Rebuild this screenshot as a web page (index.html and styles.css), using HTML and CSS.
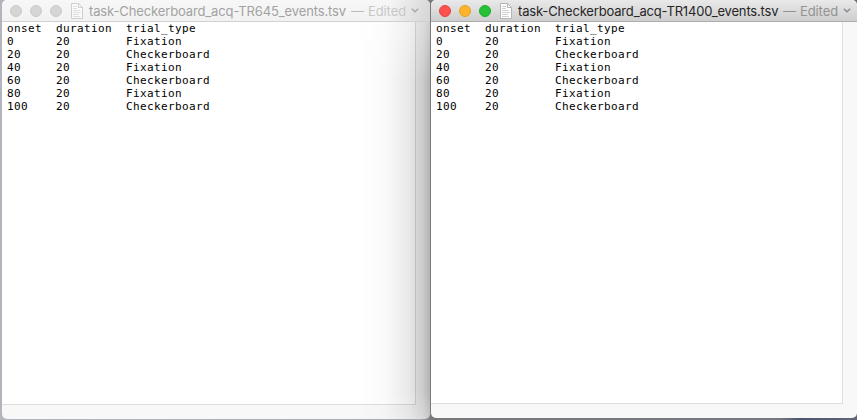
FILE: index.html
```html
<!DOCTYPE html>
<html lang="en">
<head>
<meta charset="utf-8">
<title>Event files</title>
<link rel="stylesheet" href="styles.css">
</head>
<body>
<main class="desktop">
  <section class="window inactive">
    <header class="titlebar">
      <div class="lights"><i class="light close"></i><i class="light minimize"></i><i class="light expand"></i></div>
      <svg class="doc" viewBox="0 0 12 16"><path class="page" d="M.5.5h7l4 4v11H.5z"/><path class="fold" d="M7.5.5v4h4"/><path class="lines" d="M2 3.5h4M2 5.5h4M2 7.5h7M2 9.5h8M2 11.5h6M2 13.5h7"/></svg>
      <span class="name">task-Checkerboard_acq-TR645_events.tsv</span>
      <span class="dash">—</span>
      <span class="edited">Edited</span>
      <svg class="chevron" viewBox="0 0 8 5"><path d="M.8.8 4 3.8 7.2.8"/></svg>
    </header>
    <div class="content">
      <div class="table">
        <span>onset</span><span>duration</span><span>trial_type</span>
        <span>0</span><span>20</span><span>Fixation</span>
        <span>20</span><span>20</span><span>Checkerboard</span>
        <span>40</span><span>20</span><span>Fixation</span>
        <span>60</span><span>20</span><span>Checkerboard</span>
        <span>80</span><span>20</span><span>Fixation</span>
        <span>100</span><span>20</span><span>Checkerboard</span>
      </div>
    </div>
  </section>
  <section class="window active">
    <header class="titlebar">
      <div class="lights"><i class="light close"></i><i class="light minimize"></i><i class="light expand"></i></div>
      <svg class="doc" viewBox="0 0 12 16"><path class="page" d="M.5.5h7l4 4v11H.5z"/><path class="fold" d="M7.5.5v4h4"/><path class="lines" d="M2 3.5h4M2 5.5h4M2 7.5h7M2 9.5h8M2 11.5h6M2 13.5h7"/></svg>
      <span class="name">task-Checkerboard_acq-TR1400_events.tsv</span>
      <span class="dash">—</span>
      <span class="edited">Edited</span>
      <svg class="chevron" viewBox="0 0 8 5"><path d="M.8.8 4 3.8 7.2.8"/></svg>
    </header>
    <div class="content">
      <div class="table">
        <span>onset</span><span>duration</span><span>trial_type</span>
        <span>0</span><span>20</span><span>Fixation</span>
        <span>20</span><span>20</span><span>Checkerboard</span>
        <span>40</span><span>20</span><span>Fixation</span>
        <span>60</span><span>20</span><span>Checkerboard</span>
        <span>80</span><span>20</span><span>Fixation</span>
        <span>100</span><span>20</span><span>Checkerboard</span>
      </div>
    </div>
  </section>
</main>
</body>
</html>
```
FILE: styles.css
```css
* { box-sizing: border-box; }
body { margin: 0; overflow: hidden; }
.desktop {
  display: flex;
  width: 857px;
  height: 420px;
  padding-left: 2px;
  background: linear-gradient(90deg, #b4b4bc 0, #a9a9b1 420px, #77777c 431px, #777780 780px, #4d5670 800px, #606679 857px);
}
.window {
  position: relative;
  display: flex;
  flex-direction: column;
  overflow: hidden;
  border-radius: 5px;
  background: #f8f8f8;
}
.inactive { width: 428px; height: 419px; }
.active { width: 426px; height: 418px; margin-left: 1px; }
/* shadow cast by the front window */
.inactive::after {
  content: "";
  position: absolute;
  inset: 22px 0 0 auto;
  width: 70px;
  background: linear-gradient(90deg, transparent, rgba(0,0,0,.02) 35%, rgba(0,0,0,.09) 70%, rgba(0,0,0,.18) 90%, rgba(0,0,0,.28));
  -webkit-mask-image: linear-gradient(rgba(0,0,0,.6), #000 60px, #000 370px, rgba(0,0,0,.7));
  mask-image: linear-gradient(rgba(0,0,0,.6), #000 60px, #000 370px, rgba(0,0,0,.7));
}
.titlebar {
  display: flex;
  align-items: center;
  flex: none;
  height: 22px;
  padding-left: 8px;
  background: linear-gradient(#f7f7f7, #f2f2f2);
  border-bottom: 1px solid #d0d0d0;
  font: 13px/22px Inter, sans-serif;
  white-space: nowrap;
}
.inactive .titlebar {
  background: linear-gradient(90deg, transparent 385px, rgba(0,0,0,.12)), linear-gradient(#f7f7f7, #f2f2f2);
}
.active .titlebar {
  background: linear-gradient(#e9e9e9, #cecece);
  border-bottom-color: #adadad;
}
.lights { display: flex; gap: 8px; }
.light {
  width: 12px;
  height: 12px;
  border: 1px solid #c9c9c9;
  border-radius: 50%;
  background: #d5d5d5;
}
.active .close { background: #fc514d; border-color: #e5403d; }
.active .minimize { background: #fdb42b; border-color: #e39f26; }
.active .expand { background: #26c137; border-color: #1cab2b; }
.doc { width: 12px; height: 16px; margin-left: 9px; fill: none; }
.page { fill: #fff; stroke: #b5b5b5; }
.fold { stroke: #b5b5b5; }
.lines { stroke: #bcbcbc; stroke-width: .7; }
.inactive .doc { opacity: .6; }
.name { width: 257px; margin-left: 6px; color: #a2a2a2; letter-spacing: -.13px; }
.active .name { width: 260px; color: #262626; letter-spacing: -.17px; }
.dash { width: 13px; margin-left: 5px; color: #bbb; }
.edited { width: 38px; margin-left: 4px; color: #c8c8c8; letter-spacing: -.1px; }
.active .dash, .active .edited { color: #929292; }
.chevron { width: 8px; height: 5px; margin-left: 5px; fill: none; stroke: #a8a8a8; stroke-width: 1.5; }
.active .chevron { stroke: #8c8c8c; }
.content {
  width: 414px;
  height: 383px;
  padding: 0 5px;
  background: #fff;
  border-right: 1px solid #dedede;
  border-bottom: 1px solid #dedede;
}
.active .content { width: 412px; height: 382px; }
.table {
  display: grid;
  grid-template-columns: 49px 70px auto;
  grid-auto-rows: 13px;
  color: #000;
  font: 11px/13px "DejaVu Sans Mono", monospace;
  letter-spacing: .378px;
}
```
